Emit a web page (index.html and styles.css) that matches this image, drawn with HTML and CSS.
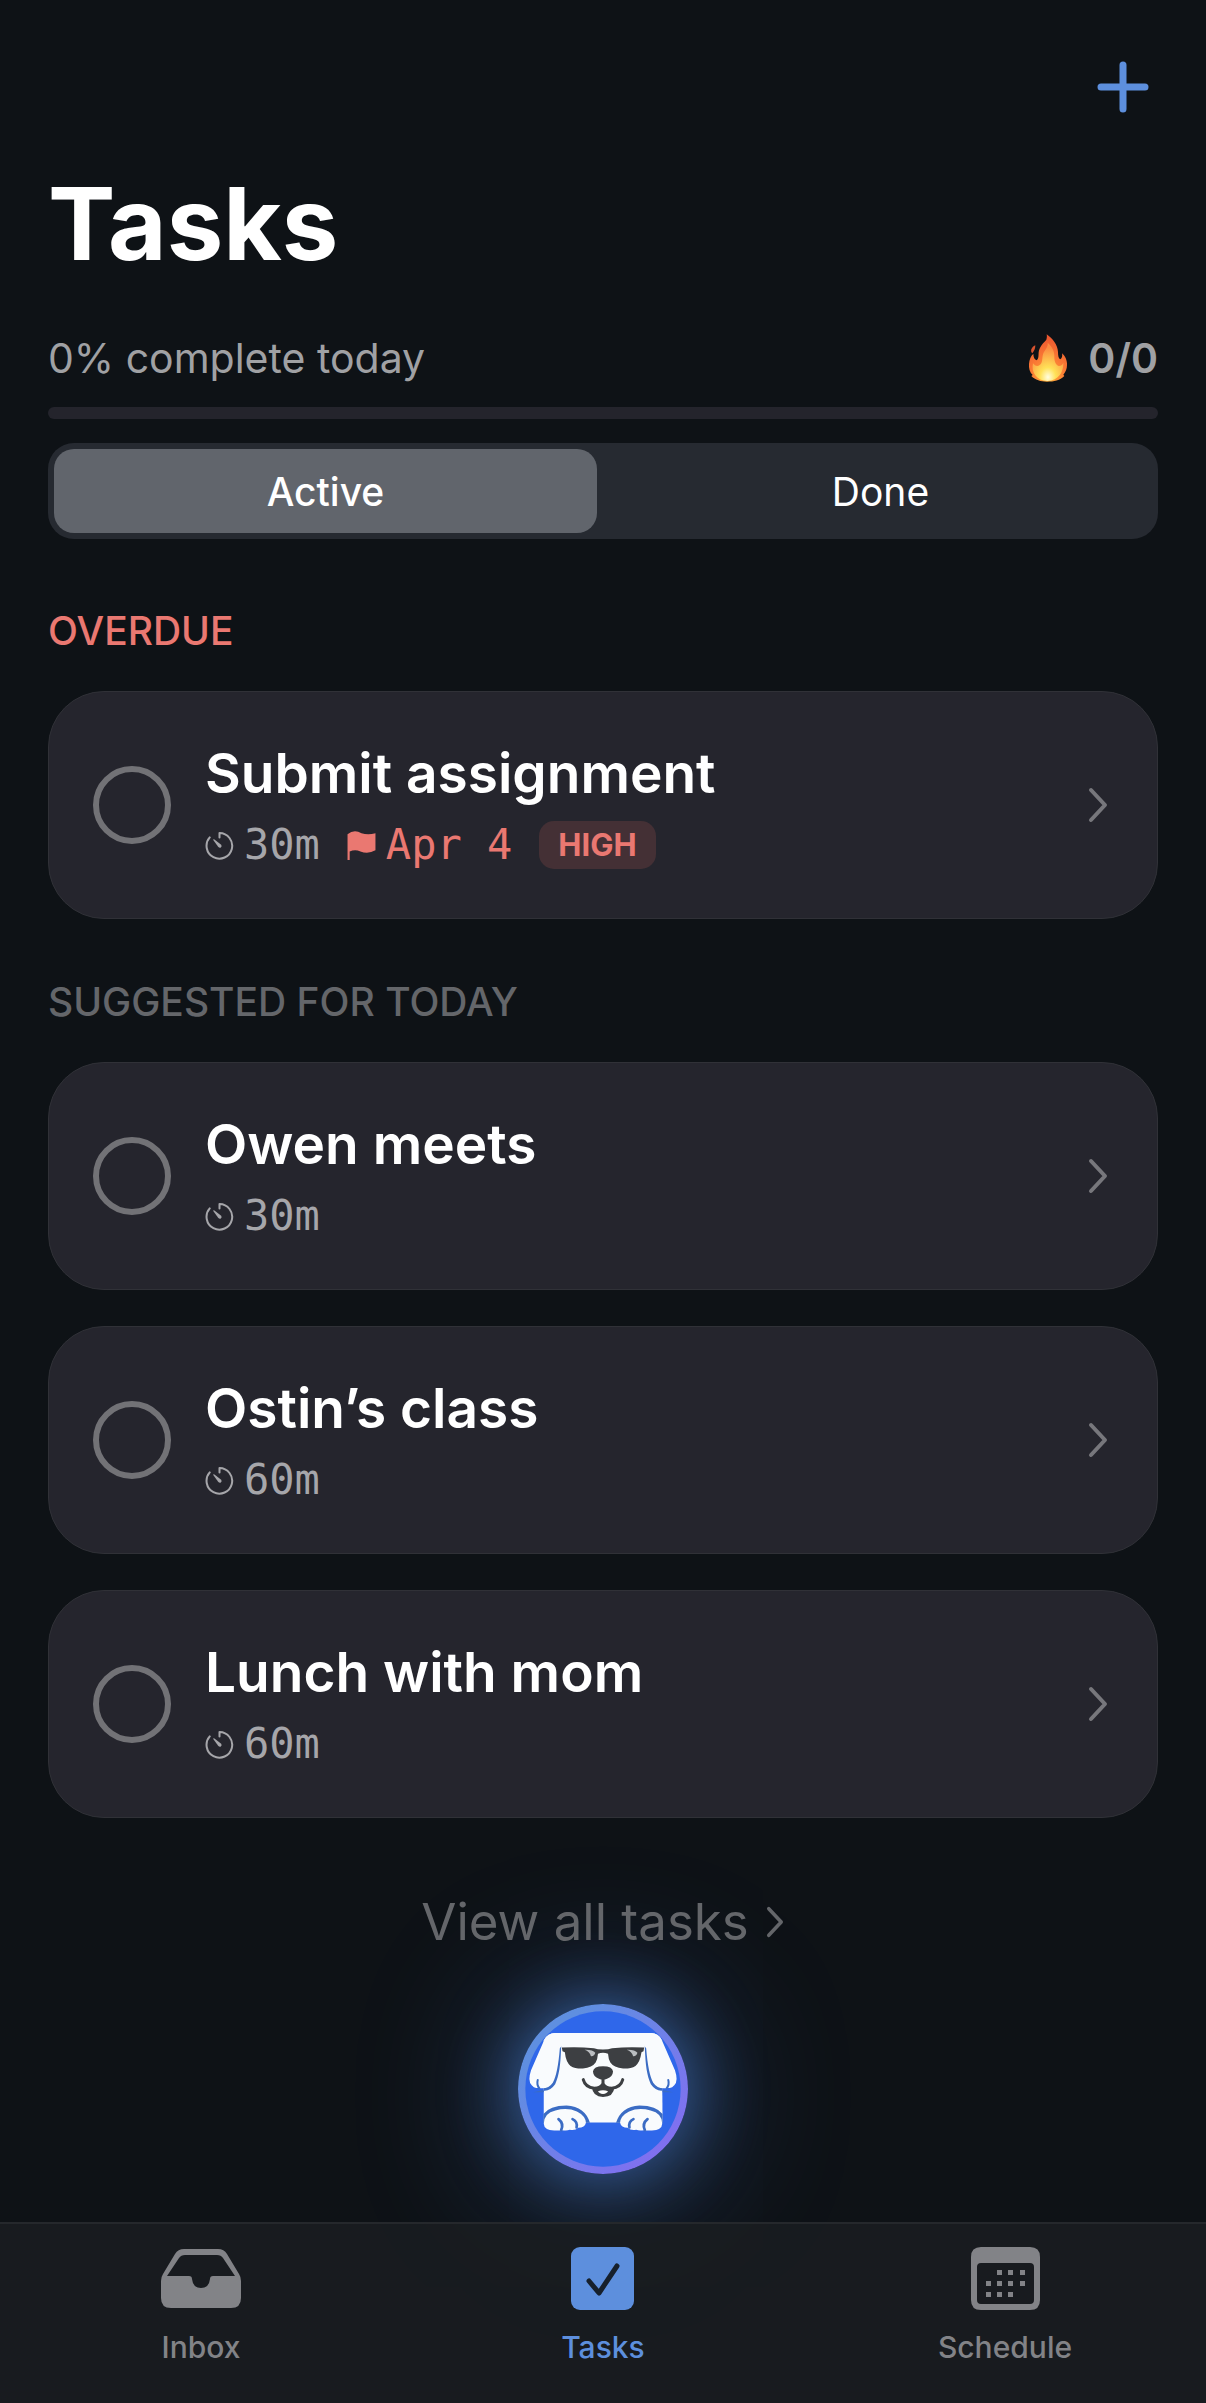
FILE: index.html
```html
<!DOCTYPE html>
<html lang="en">
<head>
    <meta charset="UTF-8">
    <meta name="viewport" content="width=device-width, initial-scale=1.0">
    <title>Tasks</title>
    <link rel="stylesheet" href="styles.css">
</head>
<body>

    <!-- Shared icons -->
    <svg class="icon-defs" aria-hidden="true">
        <symbol id="icon-timer" viewBox="46 336 84 86">
            <path d="M88 355V342A38 38 0 1 1 59 355" fill="none" stroke="currentColor" stroke-width="6" stroke-linecap="round" stroke-linejoin="round"/>
            <path d="M69 362Q70 359 73 361L93 377Q96 382 92 385Q88 387 84 383Z" fill="currentColor"/>
        </symbol>
        <symbol id="icon-chevron" viewBox="0 0 20 36">
            <path d="M3 3L17 18L3 33" fill="none" stroke="currentColor" stroke-width="4" stroke-linecap="round" stroke-linejoin="round"/>
        </symbol>
    </svg>

    <header class="top-bar">
        <button type="button" class="add-button" aria-label="Add task">
            <svg viewBox="0 0 52 52"><path d="M26 4V48M4 26H48" fill="none" stroke="currentColor" stroke-width="7" stroke-linecap="round"/></svg>
        </button>
    </header>

    <main>
        <h1>Tasks</h1>

        <div class="summary">
            <label for="dayProgress">0% complete today</label>
            <span class="streak">
                <svg class="fire" viewBox="684 906 120 148" aria-hidden="true">
                    <defs>
                        <radialGradient id="flameOuter" cx="0.5" cy="0.95" r="0.95">
                            <stop offset="0" stop-color="#ffb03a"/>
                            <stop offset="0.5" stop-color="#fa7a34"/>
                            <stop offset="1" stop-color="#e9532f"/>
                        </radialGradient>
                        <radialGradient id="flameInner" cx="0.5" cy="0.9" r="0.85">
                            <stop offset="0" stop-color="#fffde0"/>
                            <stop offset="0.3" stop-color="#ffe157"/>
                            <stop offset="0.9" stop-color="#fb8a40"/>
                        </radialGradient>
                    </defs>
                    <path d="M740 909C758 922 773 940 774 962C774 974 776 982 781 984C786 982 788 973 786 966C797 975 802 990 801 1001C801 1013 797 1022 790 1030L793 1034C780 1047 762 1051 741 1051C722 1051 706 1046 694 1034L698 1031C689 1023 686 1010 687 998C688 985 692 974 700 967C700 978 704 985 710 987C717 982 715 973 716 963C718 946 731 934 739 925C741 920 741 914 740 909Z" fill="url(#flameOuter)"/>
                    <path d="M706 942C706 952 703 958 697 966C690 960 693 948 706 942Z" fill="#d8532f"/>
                    <path d="M743 934C758 948 764 962 763 977C763 993 769 1002 777 1004C784 1003 788 999 790 994C791 1019 777 1048 742 1049C709 1049 693 1022 699 996C704 1003 711 1006 718 1002C730 995 725 979 730 966C735 955 745 947 743 934Z" fill="url(#flameInner)"/>
                </svg>
                <span class="streak-count">0/0</span>
            </span>
        </div>
        <progress id="dayProgress" class="day-progress" value="0" max="100"></progress>

        <div class="segments">
            <button type="button" class="segment selected" aria-pressed="true">Active</button>
            <button type="button" class="segment" aria-pressed="false">Done</button>
        </div>

        <section>
            <h2 class="overdue">OVERDUE</h2>
            <div class="task">
                <input type="checkbox" id="task1">
                <div class="task-body">
                    <label for="task1">Submit assignment</label>
                    <div class="meta">
                        <span class="duration"><svg><use href="#icon-timer"/></svg>30m</span>
                        <span class="due"><svg viewBox="0 0 26 27"><path d="M0 3Q6 -2 13 2Q19 4 26 2V18Q19 22 12 19Q7 17 2 19V27H0Z" fill="currentColor"/></svg>Apr 4</span>
                        <span class="badge">HIGH</span>
                    </div>
                </div>
                <a href="#" class="open" aria-label="Open Submit assignment"><svg><use href="#icon-chevron"/></svg></a>
            </div>
        </section>

        <section>
            <h2>SUGGESTED FOR TODAY</h2>
            <div class="task">
                <input type="checkbox" id="task2">
                <div class="task-body">
                    <label for="task2">Owen meets</label>
                    <div class="meta">
                        <span class="duration"><svg><use href="#icon-timer"/></svg>30m</span>
                    </div>
                </div>
                <a href="#" class="open" aria-label="Open Owen meets"><svg><use href="#icon-chevron"/></svg></a>
            </div>
            <div class="task">
                <input type="checkbox" id="task3">
                <div class="task-body">
                    <label for="task3">Ostin’s class</label>
                    <div class="meta">
                        <span class="duration"><svg><use href="#icon-timer"/></svg>60m</span>
                    </div>
                </div>
                <a href="#" class="open" aria-label="Open Ostin’s class"><svg><use href="#icon-chevron"/></svg></a>
            </div>
            <div class="task">
                <input type="checkbox" id="task4">
                <div class="task-body">
                    <label for="task4">Lunch with mom</label>
                    <div class="meta">
                        <span class="duration"><svg><use href="#icon-timer"/></svg>60m</span>
                    </div>
                </div>
                <a href="#" class="open" aria-label="Open Lunch with mom"><svg><use href="#icon-chevron"/></svg></a>
            </div>
        </section>

        <a href="#" class="view-all">View all tasks <svg><use href="#icon-chevron"/></svg></a>

        <button type="button" class="assistant" aria-label="Assistant">
            <svg viewBox="355 132 508 508">
                <defs>
                    <linearGradient id="ring" x1="0" y1="0" x2="1" y2="1">
                        <stop offset="0.2" stop-color="#5f8fe0"/>
                        <stop offset="0.85" stop-color="#8070f0"/>
                    </linearGradient>
                </defs>
                <circle cx="609" cy="386" r="254" fill="url(#ring)"/>
                <circle cx="609" cy="386" r="232" fill="#2f67ea"/>
                <!-- head and body -->
                <path d="M466 219H752Q774 219 785 240L787 486H432V240Q444 219 466 219Z" fill="#f9fbfd"/>
                <!-- ears -->
                <path d="M484 262C482 315 478 345 466 372Q450 395 427 390L400 396L432 396V240H484Z" fill="#3b6cc4"/>
                <path d="M734 262C736 315 740 345 752 372Q768 395 791 390L818 396L787 396V240H734Z" fill="#3b6cc4"/>
                <path d="M466 219Q443 220 433 240L394 330Q383 362 396 375Q404 385 414 382Q444 389 459 367Q474 340 480 264L500 240V219Z" fill="#f9fbfd"/>
                <path d="M752 219Q775 220 785 240L824 330Q835 362 822 375Q814 385 804 382Q774 389 759 367Q744 340 738 264L718 240V219Z" fill="#f9fbfd"/>
                <path d="M414 359Q410 373 419 384M804 359Q808 373 799 384" fill="none" stroke="#3b6cc4" stroke-width="6" stroke-linecap="round"/>
                <!-- sunglasses -->
                <path d="M486 262Q534 259 582 264Q592 268 609 268Q626 268 636 264Q684 259 732 262L730 273L724 276Q720 305 706 317Q692 326 669 325Q641 322 631 307Q625 297 624 281Q609 275 594 281Q593 297 587 307Q577 322 549 325Q526 326 512 317Q498 305 495 276L488 273Z" fill="#3d3f42"/>
                <path d="M554 269Q578 268 586 278Q583 289 573 288Q569 274 554 269ZM680 269Q704 268 712 278Q709 289 699 288Q695 274 680 269Z" fill="#babdc0"/>
                <!-- nose and mouth -->
                <path d="M579 334Q581 318 609 318Q637 318 639 334Q638 350 621 355Q609 360 597 355Q580 350 579 334Z" fill="#3d3f42"/>
                <path d="M609 350V373M550 358Q556 381 583 384Q603 383 609 370Q615 383 635 384Q662 381 668 358" fill="none" stroke="#3d3f42" stroke-width="9" stroke-linecap="round"/>
                <path d="M576 381Q595 387 609 373Q623 387 643 381Q641 410 609 410Q578 409 576 381Z" fill="#3d3f42"/>
                <path d="M594 393Q609 387 624 393Q621 400 609 401Q597 400 594 393Z" fill="#fff"/>
                <!-- paws -->
                <path d="M431 461Q449 435 500 435Q556 439 570 487H431ZM787 461Q769 435 718 435Q662 439 648 487H787Z" fill="#3b6cc4"/>
                <path d="M432 490Q432 458 467 450Q502 440 531 453Q557 466 558 487Q555 502 535 502Q526 511 510 508Q500 512 486 509Q477 511 463 510Q433 509 432 490ZM786 490Q786 458 751 450Q716 440 687 453Q661 466 660 487Q663 502 683 502Q692 511 708 508Q718 512 732 509Q741 511 755 510Q785 509 786 490Z" fill="#f9fbfd"/>
                <path d="M476 476Q493 489 484 509M518 476Q534 484 530 501M742 476Q725 489 734 509M700 476Q684 484 688 501" fill="none" stroke="#3b6cc4" stroke-width="8" stroke-linecap="round"/>
            </svg>
        </button>
    </main>

    <nav class="tab-bar">
        <a href="#">
            <svg viewBox="0 0 80 64" width="80" height="64">
                <path d="M23 2H57Q63 2 66 7L78 27Q80 30 80 34V51Q80 61 70 61H10Q0 61 0 51V34Q0 30 2 27L14 7Q17 2 23 2ZM24 8Q20 8 18 11L6 29H28Q31 29 31 32Q32 41 40 41Q48 41 49 32Q49 29 52 29H74L62 11Q60 8 56 8Z" fill="currentColor" fill-rule="evenodd"/>
            </svg>
            Inbox
        </a>
        <a href="#" class="current" aria-current="page">
            <svg viewBox="0 0 64 64" width="64" height="64">
                <rect width="63" height="63" rx="9" fill="currentColor"/>
                <path d="M18 34L28 46L46 19" fill="none" stroke="#16202c" stroke-width="5" stroke-linecap="round" stroke-linejoin="round"/>
            </svg>
            Tasks
        </a>
        <a href="#">
            <svg viewBox="0 0 69 64" width="69" height="64">
                <path d="M10 0H59Q69 0 69 10V53Q69 63 59 63H10Q0 63 0 53V10Q0 0 10 0ZM10 16Q6 16 6 20V53Q6 57 10 57H59Q63 57 63 53V20Q63 16 59 16Z" fill="currentColor" fill-rule="evenodd"/>
                <path d="M26 23h5v5h-5zM37 23h5v5h-5zM49 23h5v5h-5zM15 34h5v5h-5zM26 34h5v5h-5zM37 34h5v5h-5zM49 34h5v5h-5zM15 45h5v5h-5zM26 45h5v5h-5zM37 45h5v5h-5z" fill="currentColor"/>
            </svg>
            Schedule
        </a>
    </nav>

</body>
</html>
```
FILE: styles.css
```css
/* styles.css */
* {
    box-sizing: border-box;
}

body {
    font-family: Inter, "Liberation Sans", sans-serif;
    background-color: #0e1216;
    color: #fff;
    margin: 0;
    min-height: 100vh;
    display: flex;
    flex-direction: column;
}

a {
    text-decoration: none;
}

button {
    font-family: inherit;
    border: none;
    padding: 0;
    cursor: pointer;
}

svg {
    display: block;
    flex-shrink: 0;
}

.icon-defs {
    position: absolute;
    width: 0;
    height: 0;
}

/* Header */
.top-bar {
    display: flex;
    justify-content: flex-end;
    padding: 61px 57px 50px;
}

.add-button {
    width: 52px;
    height: 52px;
    background: none;
    color: #5d8fdd;
}

main {
    display: flex;
    flex-direction: column;
    padding: 0 48px 48px;
}

h1 {
    margin: 0 0 50px;
    font-size: 101px;
    line-height: 120px;
    font-weight: 700;
}

.summary {
    display: flex;
    justify-content: space-between;
    align-items: center;
    font-size: 41px;
    line-height: 50px;
    color: #a0a1a4;
}

.streak {
    display: flex;
    align-items: center;
    gap: 20px;
    font-weight: 600;
}

.fire {
    width: 40px;
    height: 50px;
}

.day-progress {
    appearance: none;
    display: block;
    width: 100%;
    height: 12px;
    margin: 24px 0;
    border: none;
    border-radius: 6px;
    background-color: #24242c;
    overflow: hidden;
}

.day-progress::-webkit-progress-bar {
    background-color: #24242c;
}

.day-progress::-webkit-progress-value {
    background-color: #5d8fdd;
}

.segments {
    display: flex;
    gap: 12px;
    padding: 6px;
    border-radius: 26px;
    background-color: #262a31;
}

.segment {
    flex: 1;
    height: 84px;
    border-radius: 20px;
    background: none;
    color: #fff;
    font-size: 39px;
    font-weight: 400;
}

.segment.selected {
    background-color: #61656c;
    font-weight: 500;
}

/* Task lists */
section {
    margin-top: 59px;
}

h2 {
    margin: 0 0 36px;
    font-size: 39px;
    line-height: 48px;
    font-weight: 500;
    color: #64666a;
}

h2.overdue {
    margin-top: 68px;
    color: #ea7871;
}

.segments + section {
    margin-top: 0;
}

.task {
    display: flex;
    align-items: center;
    gap: 34px;
    padding: 49px 49px 49px 44px;
    border: 1px solid #303137;
    border-radius: 56px;
    background-color: #25252d;
}

.task + .task {
    margin-top: 36px;
}

.task input {
    appearance: none;
    width: 78px;
    height: 78px;
    margin: 0;
    border: 6px solid #727276;
    border-radius: 50%;
}

.task input:checked {
    background-color: #5d8fdd;
}

.task-body {
    flex: 1;
}

.task-body label {
    display: block;
    margin-bottom: 16px;
    font-size: 55px;
    line-height: 64px;
    font-weight: 600;
}

.meta {
    display: flex;
    align-items: center;
    gap: 27px;
    font-family: "DejaVu Sans Mono", monospace;
    font-size: 42px;
    line-height: 48px;
    color: #a6a6aa;
}

.duration, .due {
    display: flex;
    align-items: center;
    gap: 10px;
}

.meta svg {
    width: 29px;
    height: 29px;
}

.due, .badge {
    color: #ea7871;
}

.badge {
    padding: 0 19px;
    border-radius: 15px;
    background-color: #443035;
    font-family: Inter, "Liberation Sans", sans-serif;
    font-size: 31px;
    font-weight: 700;
}

.open svg {
    width: 20px;
    height: 36px;
    color: #77777c;
}

.view-all {
    display: flex;
    align-items: center;
    align-self: center;
    gap: 16px;
    margin: 72px 0 50px;
    font-size: 51px;
    line-height: 64px;
    color: #64666a;
    position: relative;
    z-index: 1;
}

.view-all svg {
    width: 20px;
    height: 32px;
}

.assistant {
    align-self: center;
    width: 170px;
    height: 170px;
    border-radius: 50%;
    background: none;
    box-shadow: 0 0 72px rgba(80, 140, 235, 0.6), 0 6px 150px 12px rgba(70, 125, 215, 0.45);
}

/* Bottom tabs */
.tab-bar {
    display: flex;
    margin-top: auto;
    padding: 23px 0 38px;
    border-top: 2px solid #25282c;
    background-color: rgba(26, 29, 33, 0.85);
    position: relative;
}

.tab-bar a {
    flex: 1;
    display: flex;
    flex-direction: column;
    align-items: center;
    gap: 18px;
    font-size: 30px;
    line-height: 36px;
    font-weight: 500;
    color: #828387;
}

.tab-bar a.current {
    color: #5d8fdd;
}
```
